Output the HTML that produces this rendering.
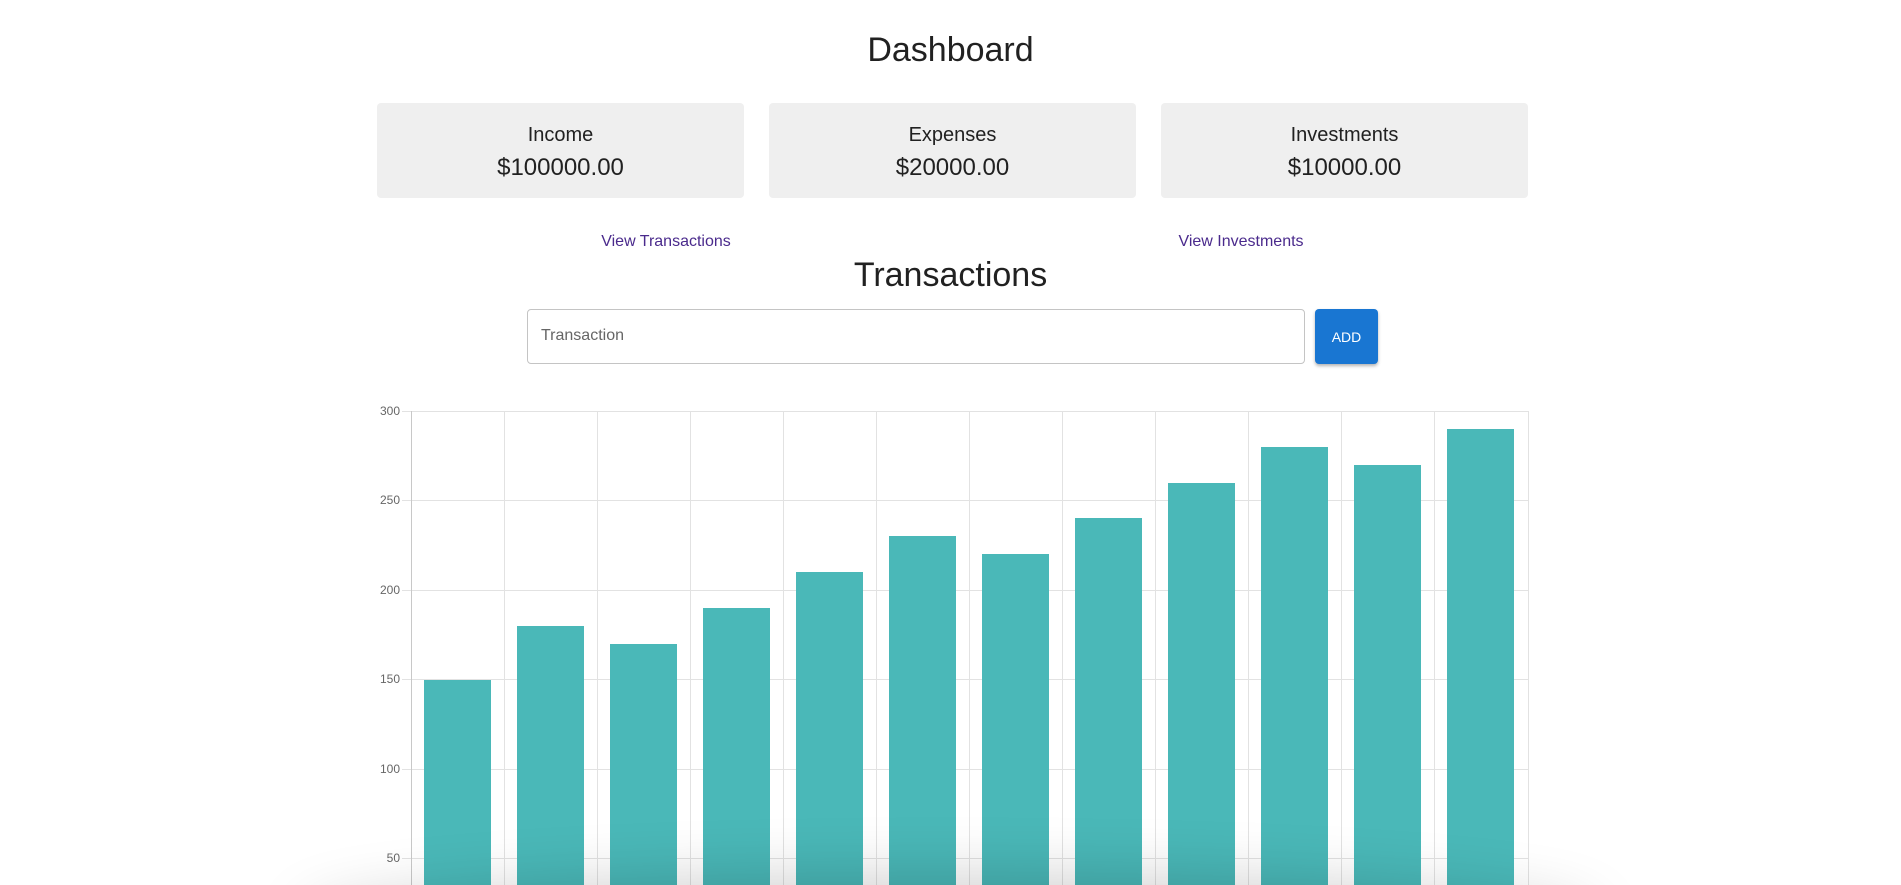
<!DOCTYPE html>
<html><head><meta charset="utf-8"><style>
html,body{margin:0;padding:0;width:1901px;height:885px;overflow:hidden;background:#fff;font-family:"Liberation Sans",Arial,sans-serif;color:#212121;position:relative}
.abs{position:absolute}
h1{position:absolute;margin:0;font-weight:400;text-align:center;width:100%}
.card{position:absolute;top:103px;width:367px;height:95px;background:#efefef;border-radius:4px;text-align:center}
.card .t{position:absolute;top:21px;width:100%;font-size:20px}
.card .v{position:absolute;top:51px;width:100%;font-size:24px}
.link{position:absolute;top:233px;font-size:16px;color:#4a2a8c;transform:translateX(-50%);white-space:nowrap}
.inp{position:absolute;left:527px;top:309px;width:776px;height:53px;border:1px solid #c4c4c4;border-radius:4px}
.inp span{position:absolute;left:13px;top:17px;font-size:16px;color:#666}
.btn{position:absolute;left:1315px;top:309px;width:63px;height:55px;background:#1976d2;border-radius:4px;color:#fff;font-size:14px;text-align:center;line-height:56px;box-shadow:0 2px 3px rgba(0,0,0,.3)}
.sh{position:absolute;left:330px;top:905px;width:1240px;height:40px;border-radius:50%;box-shadow:0 0 60px 30px rgba(0,0,0,.18)}
</style></head><body>
<h1 style="top:31px;font-size:34px">Dashboard</h1>
<div class="card" style="left:377px"><div class="t">Income</div><div class="v">$100000.00</div></div>
<div class="card" style="left:769px"><div class="t">Expenses</div><div class="v">$20000.00</div></div>
<div class="card" style="left:1161px"><div class="t">Investments</div><div class="v">$10000.00</div></div>
<div class="link" style="left:666px">View Transactions</div>
<div class="link" style="left:1241px">View Investments</div>
<h1 style="top:256px;font-size:34px">Transactions</h1>
<div class="inp"><span>Transaction</span></div>
<div class="btn">ADD</div>
<svg class="abs" style="left:0;top:0" width="1901" height="885">
<g stroke="#e2e2e2" stroke-width="1">
<line x1="402" y1="411.5" x2="1529" y2="411.5"/>
<line x1="402" y1="500.5" x2="1529" y2="500.5"/>
<line x1="402" y1="590.5" x2="1529" y2="590.5"/>
<line x1="402" y1="679.5" x2="1529" y2="679.5"/>
<line x1="402" y1="769.5" x2="1529" y2="769.5"/>
<line x1="402" y1="858.5" x2="1529" y2="858.5"/>
<line x1="504.5" y1="411" x2="504.5" y2="885"/>
<line x1="597.5" y1="411" x2="597.5" y2="885"/>
<line x1="690.5" y1="411" x2="690.5" y2="885"/>
<line x1="783.5" y1="411" x2="783.5" y2="885"/>
<line x1="876.5" y1="411" x2="876.5" y2="885"/>
<line x1="969.5" y1="411" x2="969.5" y2="885"/>
<line x1="1062.5" y1="411" x2="1062.5" y2="885"/>
<line x1="1155.5" y1="411" x2="1155.5" y2="885"/>
<line x1="1248.5" y1="411" x2="1248.5" y2="885"/>
<line x1="1341.5" y1="411" x2="1341.5" y2="885"/>
<line x1="1434.5" y1="411" x2="1434.5" y2="885"/>
<line x1="1528.5" y1="411" x2="1528.5" y2="885"/>
</g>
<line x1="411.5" y1="411" x2="411.5" y2="885" stroke="#c8c8c8"/>
<g fill="#4ab8b8">
<rect x="424" y="680" width="67" height="205"/>
<rect x="517" y="626" width="67" height="259"/>
<rect x="610" y="644" width="67" height="241"/>
<rect x="703" y="608" width="67" height="277"/>
<rect x="796" y="572" width="67" height="313"/>
<rect x="889" y="536" width="67" height="349"/>
<rect x="982" y="554" width="67" height="331"/>
<rect x="1075" y="518" width="67" height="367"/>
<rect x="1168" y="483" width="67" height="402"/>
<rect x="1261" y="447" width="67" height="438"/>
<rect x="1354" y="465" width="67" height="420"/>
<rect x="1447" y="429" width="67" height="456"/>
</g>
<g font-family="Liberation Sans, Arial, sans-serif" font-size="12" fill="#666" text-anchor="end">
<text x="400" y="415">300</text>
<text x="400" y="504">250</text>
<text x="400" y="594">200</text>
<text x="400" y="683">150</text>
<text x="400" y="773">100</text>
<text x="400" y="862">50</text>
</g>
</svg>
<div class="sh"></div>
</body></html>
